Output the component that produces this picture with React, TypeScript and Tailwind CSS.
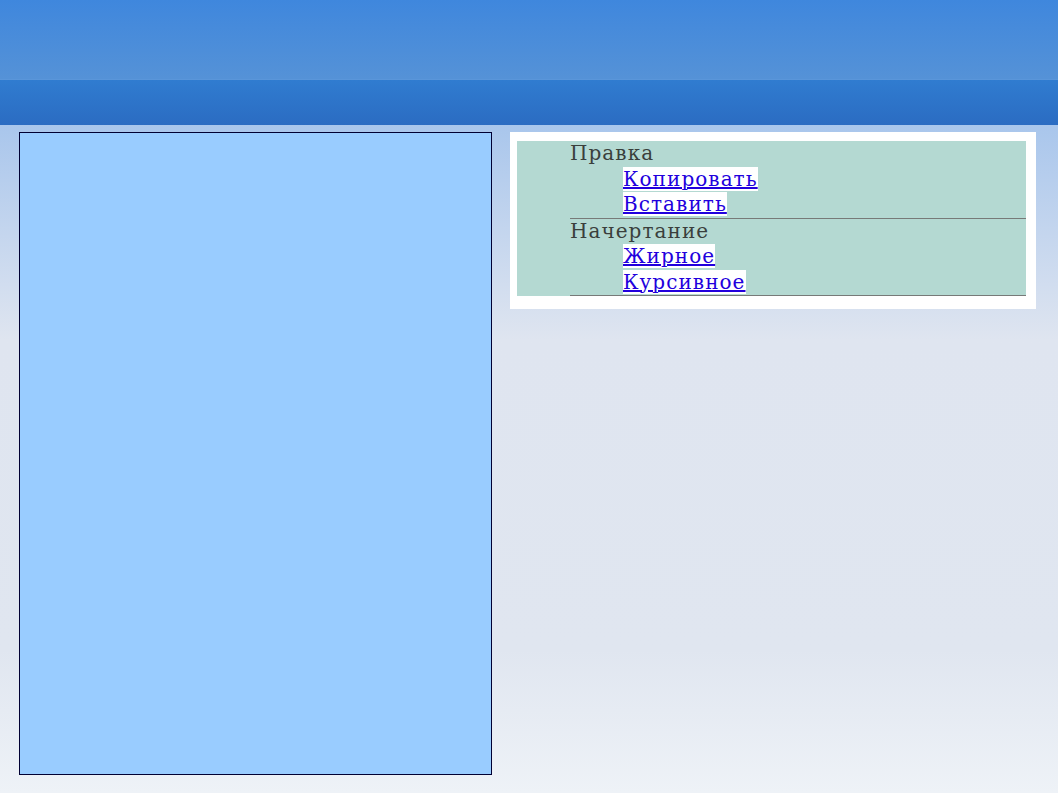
const sections = [
  { title: 'Правка', items: ['Копировать', 'Вставить'] },
  { title: 'Начертание', items: ['Жирное', 'Курсивное'] },
]

const App = () => {
  return (
    <div className="w-[1058px] h-[793px] overflow-hidden bg-[linear-gradient(to_bottom,#a9c6ec_125px,#dfe5f0_340px,#e0e6f0_650px,#eef2f7_793px)] font-['DejaVu_Serif',serif]">
      <div className="h-[79px] bg-[linear-gradient(to_bottom,#3f87dd,#5592d7)]" />
      <div className="h-[46px] border-t border-[#5a96da] bg-[linear-gradient(to_bottom,#307cd0,#2b6cc2)]" />
      <div className="flex items-start gap-[18px] pl-[19px] pt-[7px]">
        <div className="w-[473px] h-[643px] bg-[#99ccff] border border-[#000033]" />
        <div className="w-[526px] bg-white pl-[7px] pr-[10px] pt-[9px] pb-[13px]">
          <ul className="bg-[#b4d9d2] pl-[53px]">
            {sections.map((s) => (
              <li key={s.title} className="border-b border-[#777a78] text-[20px] leading-[25.5px] tracking-[1.05px] text-[#3a3f3c]">
                {s.title}
                <ul className="pl-[53px]">
                  {s.items.map((it) => (
                    <li key={it}>
                      <a href="#" className="bg-white text-[#2200dd] underline">{it}</a>
                    </li>
                  ))}
                </ul>
              </li>
            ))}
          </ul>
        </div>
      </div>
    </div>
  )
}

export default App
